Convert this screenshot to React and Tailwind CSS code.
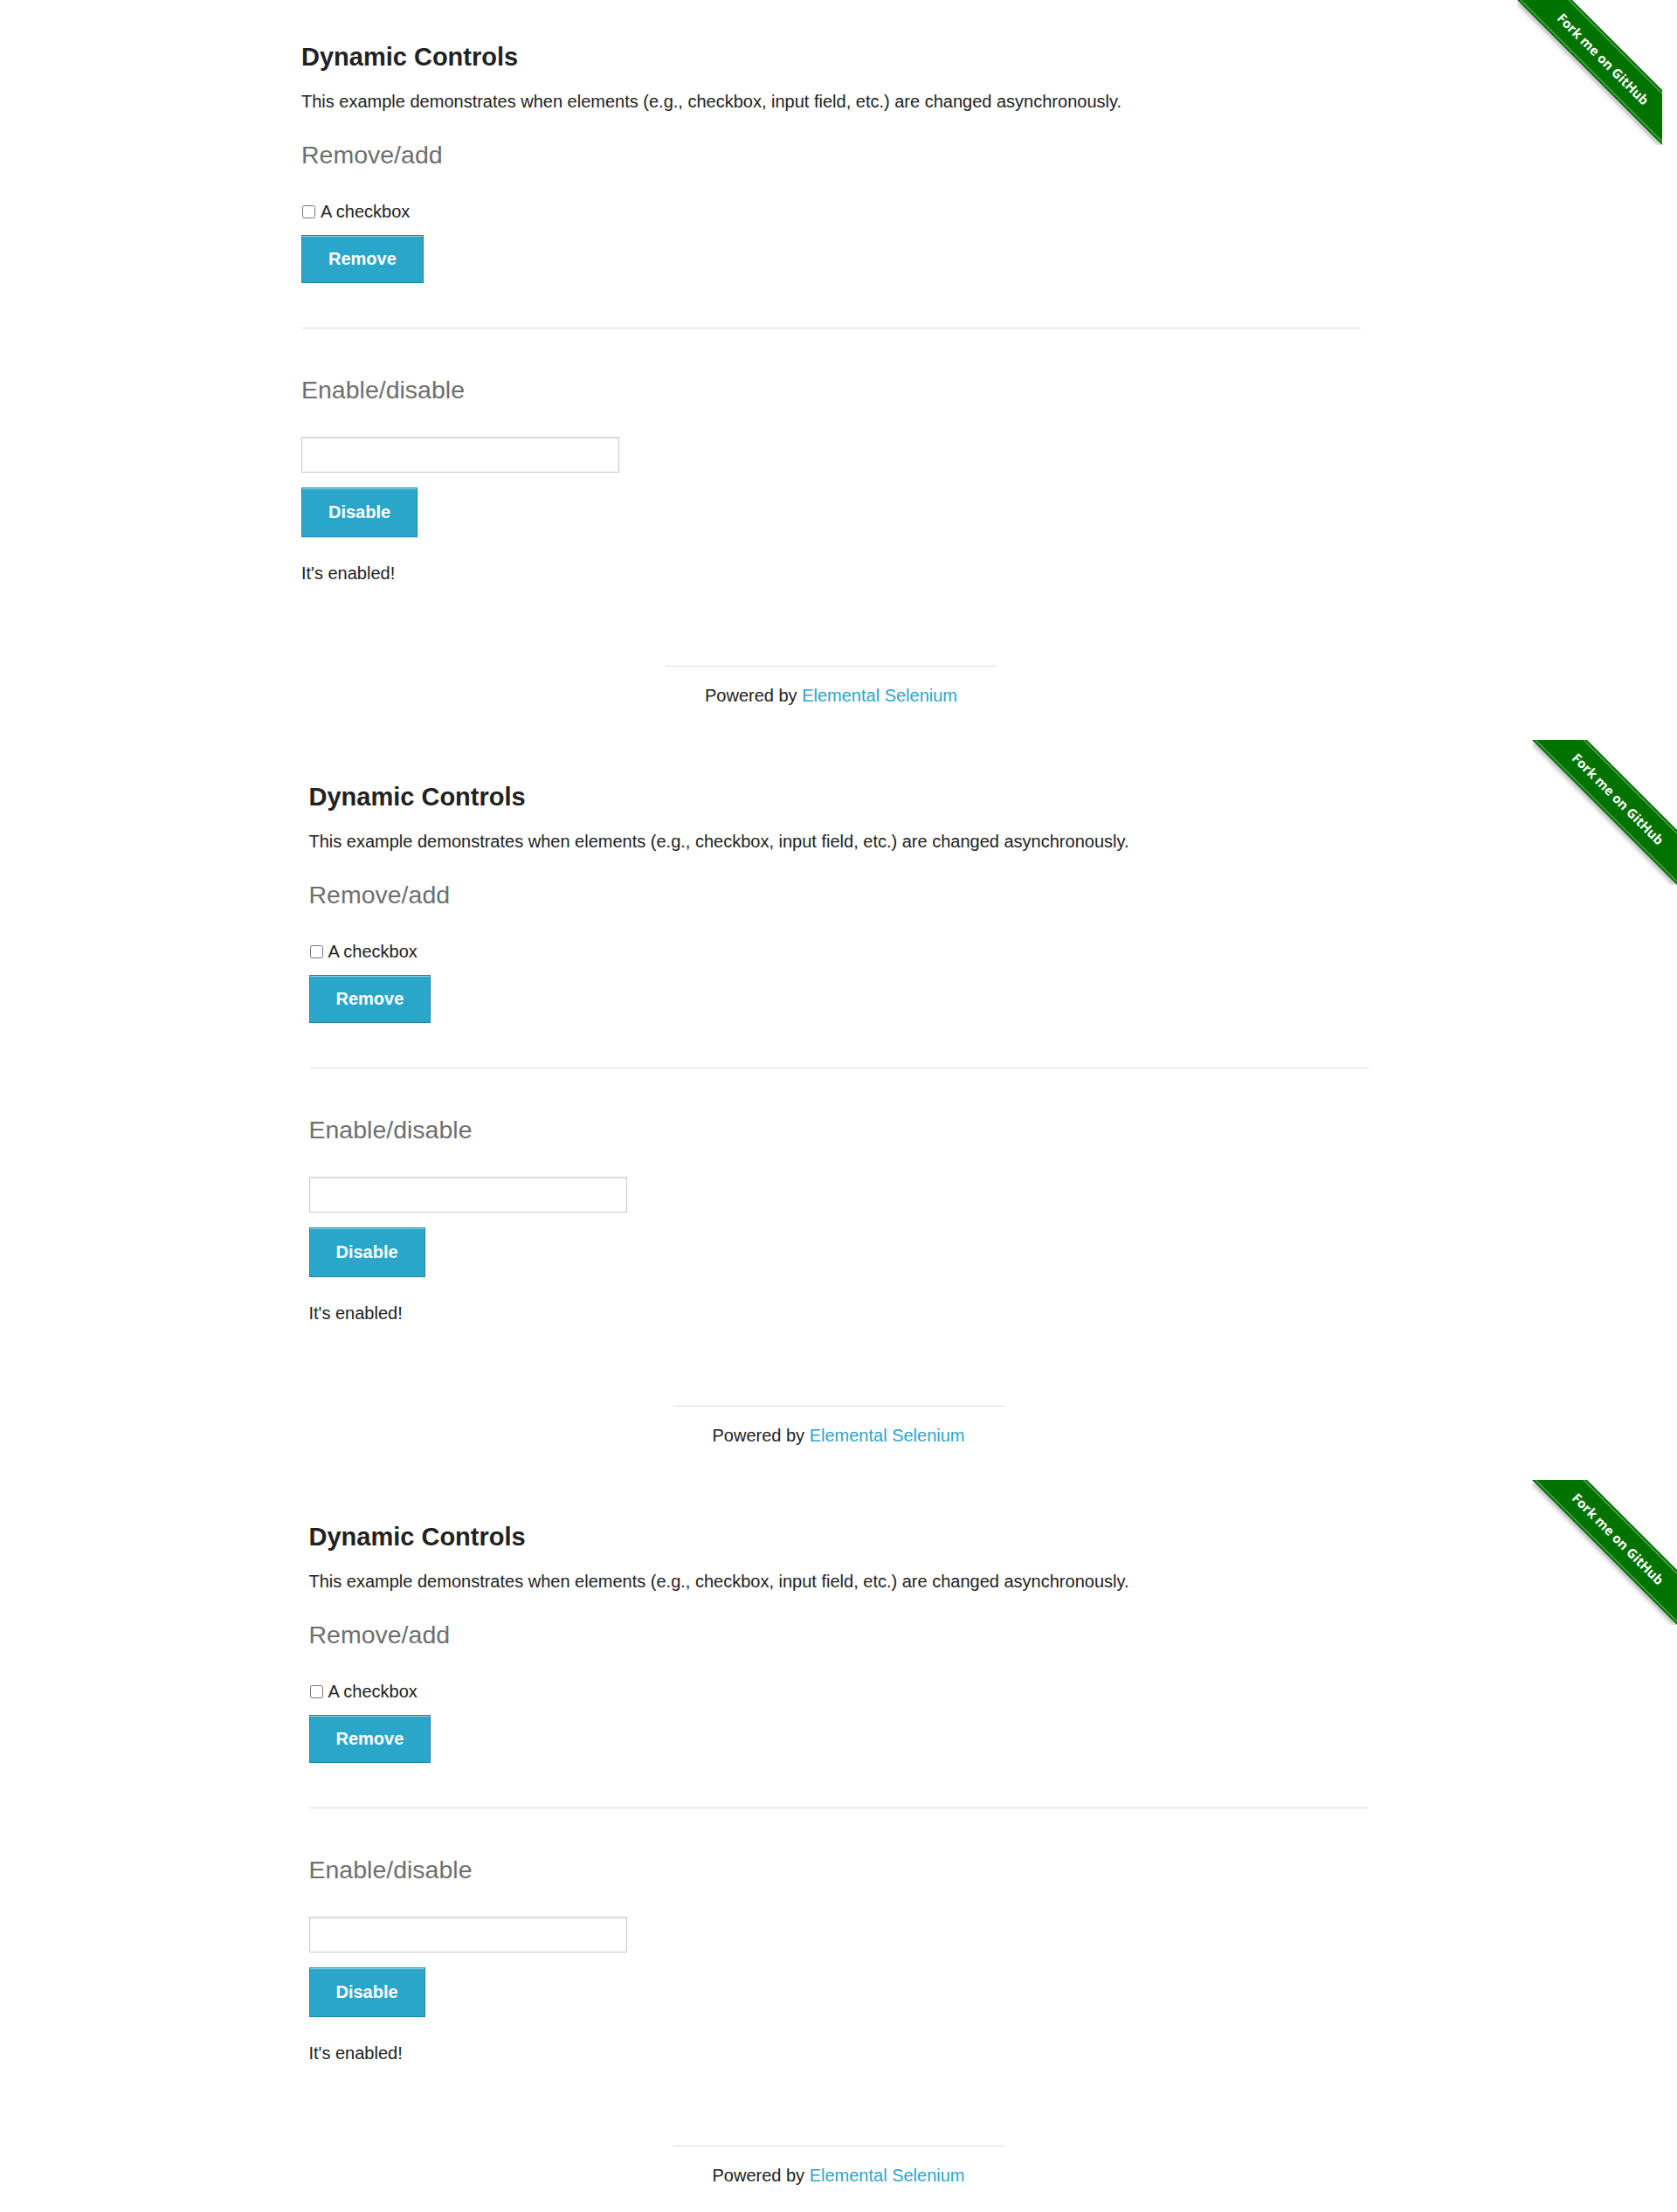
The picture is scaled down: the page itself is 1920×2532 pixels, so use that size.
import React from 'react';

const Ribbon = () => (
  <div className="absolute top-0 right-0 w-[166px] h-[166px] pointer-events-none">
    <svg width="166" height="166" viewBox="0 0 166 166">
      <defs>
        <filter id="ribbonShadow" x="-20%" y="-20%" width="140%" height="140%">
          <feGaussianBlur stdDeviation="2" />
        </filter>
      </defs>
      <polygon points="-2,3 61,3 164,106 164,169" fill="rgba(0,0,0,0.25)" filter="url(#ribbonShadow)" />
      <polygon points="0,0 63,0 166,103 166,166" fill="#007200" />
      <line x1="4" y1="0" x2="166" y2="162" stroke="rgba(255,255,255,0.35)" strokeWidth="1.5" />
      <line x1="59" y1="0" x2="166" y2="107" stroke="rgba(255,255,255,0.35)" strokeWidth="1.5" />
      <text
        x="98.75"
        y="67.25"
        transform="rotate(45 98.75 67.25)"
        textAnchor="middle"
        dominantBaseline="central"
        fill="#ffffff"
        fontFamily="'Open Sans', 'Liberation Sans', sans-serif"
        fontWeight="700"
        fontSize="15"
      >
        Fork me on GitHub
      </text>
    </svg>
  </div>
);

// one captured viewport of the Dynamic Controls page
const Block = ({ className }) => (
  <div className={className}>
    <Ribbon />
    <div className="w-[1213px] mx-auto pt-[48px]">
      <h3 className="text-[29px] leading-[34px] font-bold text-[#222]">Dynamic Controls</h3>
      <p className="mt-[22px] text-[20px] leading-[24px] text-[#222]">
        This example demonstrates when elements (e.g., checkbox, input field, etc.) are changed asynchronously.
      </p>

      <h4 className="mt-[32px] text-[28.5px] leading-[34px] text-[#6f6f6f]">Remove/add</h4>
      <div className="mt-[36px] flex items-center h-[24px]">
        <input type="checkbox" className="ml-[1px] mr-[6px] w-[15px] h-[15px]" />
        <span className="text-[20px] leading-[24px] text-[#222]">A checkbox</span>
      </div>
      <button className="mt-[15px] block h-[55px] px-[30px] bg-[#2ba6cb] border border-[#2284a1] text-white font-bold text-[20px] leading-[23px] shadow-[inset_0_1px_0_rgba(255,255,255,0.5)]">
        Remove
      </button>

      <div className="mt-[51px] border-t border-[#ddd]" />

      <h4 className="mt-[53px] text-[28.5px] leading-[34px] text-[#6f6f6f]">Enable/disable</h4>
      <input
        type="text"
        className="mt-[37px] block w-[364px] h-[41px] border border-[#ccc] bg-white shadow-[inset_0_1px_2px_rgba(0,0,0,0.1)]"
      />
      <button className="mt-[17px] block h-[57px] px-[30px] bg-[#2ba6cb] border border-[#2284a1] text-white font-bold text-[20px] leading-[23px] shadow-[inset_0_1px_0_rgba(255,255,255,0.5)]">
        Disable
      </button>
      <p className="mt-[29px] text-[20px] leading-[24px] text-[#222]">It's enabled!</p>

      <div className="mt-[94px] w-[379px] mx-auto border-t border-[#ddd]" />
      <div className="mt-[21px] text-center text-[20px] leading-[24px] text-[#222]">
        Powered by <a href="#" className="text-[#2ba6cb]">Elemental Selenium</a>
      </div>
    </div>
  </div>
);

export default function App() {
  return (
    <div className="w-[1920px] h-[2532px] bg-white overflow-hidden font-['Liberation_Sans',Arial,sans-serif]">
      <Block className="relative w-[1903px] h-[847px] overflow-hidden" />
      <Block className="relative w-full h-[847px] overflow-hidden" />
      <Block className="relative w-full h-[838px] overflow-hidden" />
    </div>
  );
}
